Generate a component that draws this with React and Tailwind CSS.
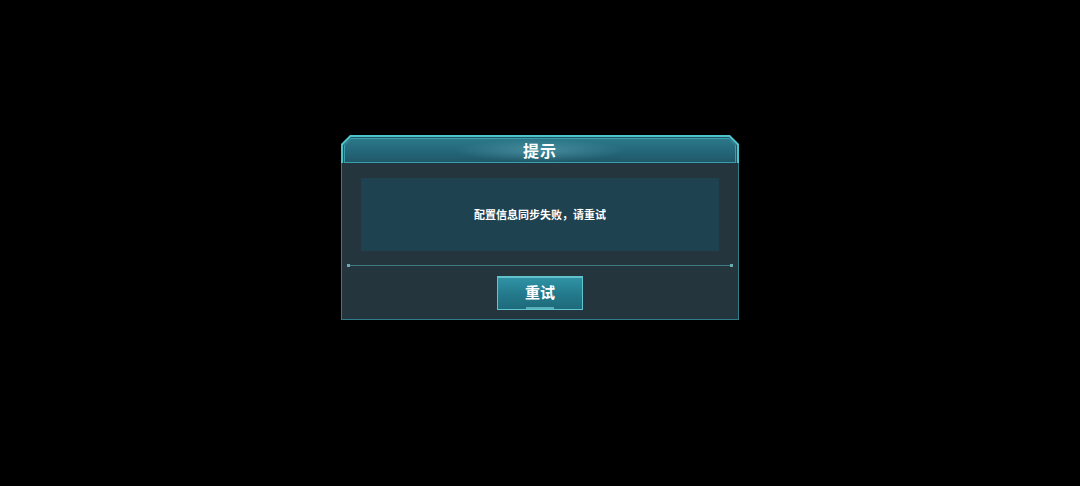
export default function App() {
  return (
    <div
      className="w-full h-[486px] bg-black flex justify-center pt-[135px]"
      style={{ fontFamily: '"Noto Sans CJK SC", "Noto Sans", sans-serif' }}
    >
      <div className="w-[398px] flex flex-col">
        {/* title bar with chamfered top corners */}
        <div className="h-[28px] bg-[#4ec3cc] px-[2px] pt-[2px] [clip-path:polygon(9px_0,calc(100%-9px)_0,100%_9px,100%_100%,0_100%,0_9px)]">
          <div className="h-full bg-[#1c5866] px-[1px] pt-[1px] [clip-path:polygon(8px_0,calc(100%-8px)_0,100%_8px,100%_100%,0_100%,0_8px)]">
            <div className="h-full bg-[#3a9eab] px-[1px] pt-[1px] [clip-path:polygon(7px_0,calc(100%-7px)_0,100%_7px,100%_100%,0_100%,0_7px)]">
              <div className="relative h-full flex items-center justify-center border-b border-[#3a9eab] bg-[linear-gradient(180deg,#2c7889_0%,#24667a_55%,#1f5868_100%)] [clip-path:polygon(6px_0,calc(100%-6px)_0,100%_6px,100%_100%,0_100%,0_6px)]">
                <div className="absolute inset-x-[110px] inset-y-0 bg-[radial-gradient(ellipse_at_center,rgba(130,205,215,0.35)_0%,rgba(130,205,215,0)_70%)]" />
                <span className="relative text-white text-[16px] font-bold leading-none tracking-[1px] -mt-[1px]">
                  提示
                </span>
              </div>
            </div>
          </div>
        </div>

        {/* body */}
        <div className="h-[157px] bg-[#25353d] border-x border-b border-[#2f7d88] flex flex-col">
          <div className="mt-[15px] mx-[19px] h-[73px] bg-[#1f4250] flex items-center justify-center">
            <span className="text-white text-[11px] font-bold leading-none">
              配置信息同步失败，请重试
            </span>
          </div>

          {/* divider with end dots */}
          <div className="mt-[13px] mx-[5px] flex items-center">
            <div className="w-[3px] h-[3px] bg-[#6aaab0]" />
            <div className="flex-1 h-px bg-[#3d7a82]" />
            <div className="w-[3px] h-[3px] bg-[#6aaab0]" />
          </div>

          <div className="mt-[9px] flex justify-center">
            <button className="relative w-[86px] h-[34px] border border-[#5fc6cf] bg-[linear-gradient(180deg,#2f94a6_0%,#23798b_55%,#1e6a7b_100%)] flex items-center justify-center pb-[4px] shadow-[inset_0_1px_0_rgba(160,230,235,0.5)]">
              <span className="text-white text-[15px] font-bold leading-none">
                重试
              </span>
              <span className="absolute bottom-0 left-[28px] right-[28px] h-[2px] bg-[#7fdde3] opacity-60" />
            </button>
          </div>
        </div>
      </div>
    </div>
  );
}
